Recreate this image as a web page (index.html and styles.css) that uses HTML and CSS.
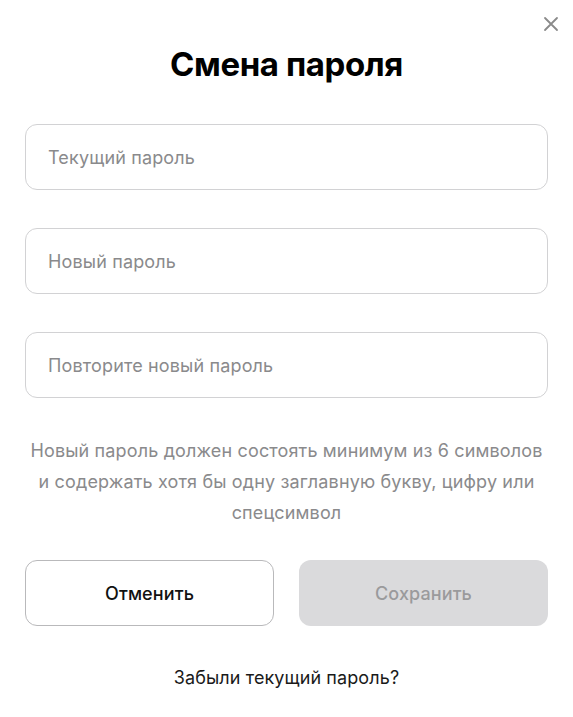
FILE: index.html
```html
<!DOCTYPE html>
<html lang="ru">
<head>
<meta charset="utf-8">
<link rel="stylesheet" href="styles.css">
</head>
<body>
<div class="modal">
  <button class="close" aria-label="Закрыть">
    <svg width="16" height="16" viewBox="0 0 16 16"><path d="M2 2L14 14M14 2L2 14" stroke="#8a8a8a" stroke-width="1.8" stroke-linecap="round"/></svg>
  </button>
  <h1 class="title">Смена пароля</h1>
  <form class="form">
    <input class="field" type="password" placeholder="Текущий пароль">
    <input class="field" type="password" placeholder="Новый пароль">
    <input class="field" type="password" placeholder="Повторите новый пароль">
  </form>
  <p class="hint">Новый пароль должен состоять минимум из 6 символов и содержать хотя бы одну заглавную букву, цифру или спецсимвол</p>
  <div class="actions">
    <button class="btn btn-cancel">Отменить</button>
    <button class="btn btn-save" disabled>Сохранить</button>
  </div>
  <a class="forgot" href="#">Забыли текущий пароль?</a>
</div>
</body>
</html>
```
FILE: styles.css
```css
* { box-sizing: border-box; }
html, body { margin: 0; background: #fff; }
body { font-family: Inter, "Noto Sans", sans-serif; color: #111; }
.modal {
  position: relative;
  width: 573px;
  height: 717px;
  padding: 42px 25px 0 25px;
  display: flex;
  flex-direction: column;
}
.close {
  position: absolute;
  top: 14px;
  right: 12px;
  width: 20px;
  height: 20px;
  padding: 0;
  border: 0;
  background: none;
  display: flex;
  align-items: center;
  justify-content: center;
}
.title {
  margin: 0;
  text-align: center;
  font-size: 33px;
  font-weight: 700;
  letter-spacing: -0.4px;
  line-height: 44px;
  color: #000;
}
.form {
  margin-top: 38px;
  display: flex;
  flex-direction: column;
  gap: 38px;
}
.field {
  width: 100%;
  height: 66px;
  border: 1px solid #d2d2d4;
  border-radius: 12px;
  padding: 0 22px;
  font-family: inherit;
  font-size: 18px;
  letter-spacing: 0.15px;
  color: #111;
  outline: none;
}
.field::placeholder { color: #8a8a8c; }
.hint {
  margin: 37px 0 0;
  padding: 0 4px;
  text-align: center;
  font-size: 18px;
  letter-spacing: 0.15px;
  line-height: 31px;
  color: #8a8a8c;
}
.actions {
  margin-top: 32px;
  display: grid;
  grid-template-columns: 1fr 1fr;
  gap: 25px;
}
.btn {
  height: 66px;
  border-radius: 12px;
  font-family: inherit;
  font-size: 18px;
  font-weight: 500;
  letter-spacing: 0.1px;
}
.btn-cancel { background: #fff; border: 1px solid #b9b9bb; color: #111; }
.btn-save { background: #dadadc; border: 0; color: #9a9a9c; }
.forgot {
  margin-top: 41px;
  text-align: center;
  font-size: 18px;
  letter-spacing: 0.1px;
  font-weight: 400;
  color: #1a1a1a;
  text-decoration: none;
}
```
